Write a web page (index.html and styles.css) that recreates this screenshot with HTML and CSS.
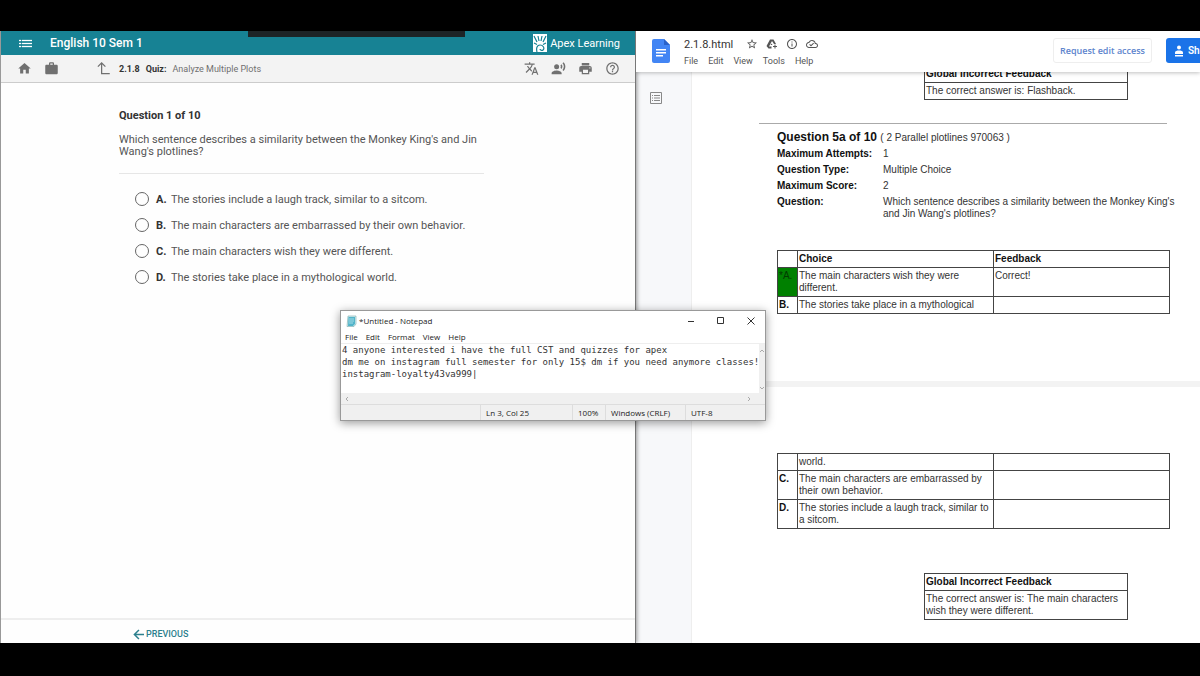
FILE: index.html
```
<!DOCTYPE html>
<html lang="en">
<head>
  <meta charset="UTF-8">
  <title>English 10 Sem 1</title>
  <link rel="stylesheet" href="styles.css">
</head>
<body>

  <div class="desktop">

    <section class="apex">
      <header class="apex-header">
        <button class="icon-btn" aria-label="Contents">
          <svg class="icon-menu" viewBox="0 0 13 9"><path d="M0 1h2v1H0zM3 1h10v1H3zM0 4h2v1H0zM3 4h10v1H3zM0 7h2v1H0zM3 7h10v1H3z" stroke="currentColor" stroke-width=".3"/></svg>
        </button>
        <h1 class="course">English 10 Sem 1</h1>
        <div class="apex-logo">
          <svg viewBox="0 0 14 18"><path fill="#fff" d="M0 0h14v18H0z"/><g fill="none" stroke="#178294" stroke-width="1.2"><path d="M1 2l3 6M5 2l1 5M9 2L8 7M13 2l-3 6M1 9l3 1.5M13 9l-3 1.5"/><path d="M4 18c-1-4 0-7 3-7s5 3 3 5c-1 1-3 0-3-1"/></g></svg>
          <span>Apex Learning</span>
        </div>
      </header>

      <nav class="apex-toolbar">
        <button class="icon-btn" aria-label="Home"><svg viewBox="0 0 24 24"><path d="M10 20v-6h4v6h5v-8h3L12 3 2 12h3v8z"/></svg></button>
        <button class="icon-btn" aria-label="Portfolio"><svg viewBox="0 0 24 24"><path d="M20 6h-4V4c0-1.11-.89-2-2-2h-4c-1.11 0-2 .89-2 2v2H4c-1.11 0-2 .89-2 2v11c0 1.11.89 2 2 2h16c1.11 0 2-.89 2-2V8c0-1.11-.89-2-2-2zm-6 0h-4V4h4v2z"/></svg></button>
        <button class="icon-btn up" aria-label="Up one level"><svg viewBox="0 0 24 24"><path d="M3 9l6-6 6 6M9 3v17h13" fill="none" stroke="currentColor" stroke-width="2"/></svg></button>
        <div class="crumb"><b>2.1.8</b><b>Quiz:</b><span>Analyze Multiple Plots</span></div>
        <div class="tools">
          <button class="icon-btn" aria-label="Translate"><svg viewBox="0 0 24 24"><path d="M12.87 15.07l-2.54-2.51.03-.03c1.74-1.94 2.98-4.17 3.71-6.53H17V4h-7V2H8v2H1v1.99h11.17C11.5 7.92 10.44 9.75 9 11.35 8.07 10.32 7.3 9.19 6.69 8h-2c.73 1.63 1.73 3.17 2.98 4.56l-5.09 5.02L4 19l5-5 3.11 3.11.76-2.04zM18.5 10h-2L12 22h2l1.12-3h4.75L21 22h2l-4.5-12zm-2.62 7l1.62-4.33L19.12 17h-3.24z"/></svg></button>
          <button class="icon-btn" aria-label="Read aloud"><svg viewBox="0 0 24 24"><circle cx="9" cy="9" r="4"/><path d="M9 15c-2.67 0-8 1.34-8 4v2h16v-2c0-2.66-5.33-4-8-4zM16.76 5.36l-1.68 1.69c.84 1.18.84 2.71 0 3.89l1.68 1.69c2.02-2.02 2.02-5.07 0-7.27zM20.07 2l-1.63 1.63c2.77 3.02 2.77 7.56 0 10.74L20.07 16c3.9-3.89 3.91-9.95 0-14z"/></svg></button>
          <button class="icon-btn" aria-label="Print"><svg viewBox="0 0 24 24"><path d="M19 8H5c-1.66 0-3 1.34-3 3v6h4v4h12v-4h4v-6c0-1.66-1.34-3-3-3zm-3 11H8v-5h8v5zm3-7c-.55 0-1-.45-1-1s.45-1 1-1 1 .45 1 1-.45 1-1 1zm-1-9H6v4h12V3z"/></svg></button>
          <button class="icon-btn" aria-label="Help"><svg viewBox="0 0 24 24"><path d="M11 18h2v-2h-2v2zm1-16C6.48 2 2 6.48 2 12s4.48 10 10 10 10-4.48 10-10S17.52 2 12 2zm0 18c-4.41 0-8-3.59-8-8s3.59-8 8-8 8 3.59 8 8-3.59 8-8 8zm0-14c-2.21 0-4 1.79-4 4h2c0-1.1.9-2 2-2s2 .9 2 2c0 2-3 1.75-3 5h2c0-2.25 3-2.5 3-5 0-2.21-1.79-4-4-4z"/></svg></button>
        </div>
      </nav>

      <main class="quiz">
        <h2>Question 1 of 10</h2>
        <p>Which sentence describes a similarity between the Monkey King's and Jin Wang's plotlines?</p>
        <form class="options">
          <label><input type="radio" name="answer"><b>A.</b><span>The stories include a laugh track, similar to a sitcom.</span></label>
          <label><input type="radio" name="answer"><b>B.</b><span>The main characters are embarrassed by their own behavior.</span></label>
          <label><input type="radio" name="answer"><b>C.</b><span>The main characters wish they were different.</span></label>
          <label><input type="radio" name="answer"><b>D.</b><span>The stories take place in a mythological world.</span></label>
        </form>
      </main>

      <footer class="apex-footer">
        <a href="#"><svg viewBox="0 0 12 12"><path d="M12 6H2M6.5 1L1.5 6l5 5" fill="none" stroke="currentColor" stroke-width="1.6"/></svg>PREVIOUS</a>
      </footer>
    </section>

    <section class="docs">
      <header class="docs-header">
        <svg class="docs-logo" viewBox="0 0 18 24"><path fill="#4285f4" d="M2 0h10l6 6v16a2 2 0 0 1-2 2H2a2 2 0 0 1-2-2V2a2 2 0 0 1 2-2z"/><path fill="#2a62c9" d="M12 0l6 6h-6z"/><path fill="#fff" d="M4 10h10v1.5H4zM4 13h10v1.5H4zM4 16h7v1.5H4z"/></svg>
        <div class="docs-title">
          <div class="title-row">
            <span class="doc-name">2.1.8.html</span>
            <button class="icon-btn" aria-label="Star"><svg viewBox="0 0 24 24"><path d="M22 9.24l-7.19-.62L12 2 9.19 8.63 2 9.24l5.46 4.73L5.82 21 12 17.27 18.18 21l-1.63-7.03L22 9.24zM12 15.4l-3.76 2.27 1-4.28-3.32-2.88 4.38-.38L12 6.1l1.71 4.04 4.38.38-3.32 2.88 1 4.28L12 15.4z"/></svg></button>
            <button class="icon-btn" aria-label="Add shortcut to Drive"><svg viewBox="0 0 24 24"><path d="M8 3h7l5 9h-4l-4-6-6 11h5v4H5l-4-5zM11 11l2 3h-4zM17 13h2v3h3v2h-3v3h-2v-3h-3v-2h3z"/></svg></button>
            <button class="icon-btn" aria-label="Details"><svg viewBox="0 0 24 24"><path d="M11 7h2v2h-2zm0 4h2v6h-2zm1-9C6.48 2 2 6.48 2 12s4.48 10 10 10 10-4.48 10-10S17.52 2 12 2zm0 18c-4.41 0-8-3.59-8-8s3.59-8 8-8 8 3.59 8 8-3.59 8-8 8z"/></svg></button>
            <button class="icon-btn" aria-label="Saved to Drive"><svg viewBox="0 0 24 24"><path d="M19.35 10.04C18.67 6.59 15.64 4 12 4 9.11 4 6.6 5.64 5.35 8.04 2.34 8.36 0 10.91 0 14c0 3.31 2.69 6 6 6h13c2.76 0 5-2.24 5-5 0-2.64-2.05-4.78-4.65-4.96zM19 18H6c-2.21 0-4-1.79-4-4 0-2.05 1.53-3.76 3.56-3.97l1.07-.11.5-.95C8.08 7.14 9.94 6 12 6c2.62 0 4.88 1.86 5.39 4.43l.3 1.5 1.53.11c1.56.1 2.78 1.41 2.78 2.96 0 1.65-1.35 3-3 3zm-9-3.82l-2.09-2.09L6.5 13.5 10 17l6.01-6.01-1.41-1.41z"/></svg></button>
          </div>
          <div class="docs-menu">
            <button>File</button><button>Edit</button><button>View</button><button>Tools</button><button>Help</button>
          </div>
        </div>
        <button class="request">Request edit access</button>
        <button class="share"><svg viewBox="0 0 10 12"><circle cx="5" cy="2.5" r="2"/><path d="M1 9V7.5C1 6 3 5.5 5 5.5S9 6 9 7.5V9zM1 10h8v1.5H1z"/></svg>Share</button>
      </header>

      <div class="docs-body">
        <aside class="outline">
          <button class="icon-btn" aria-label="Show outline"><svg viewBox="0 0 12 12"><path d="M.5 .5h11v11H.5zM2 3.5h1M4 3.5h6M2 6h1M4 6h6M2 8.5h1M4 8.5h6" fill="none" stroke="currentColor"/></svg></button>
        </aside>
        <div class="pages">
          <article class="page page-one">
            <table class="feedback">
              <tr><th>Global Incorrect Feedback</th></tr>
              <tr><td>The correct answer is: Flashback.</td></tr>
            </table>
            <hr>
            <h2>Question 5a of 10 <small>( 2 Parallel plotlines 970063 )</small></h2>
            <dl>
              <dt>Maximum Attempts:</dt><dd>1</dd>
              <dt>Question Type:</dt><dd>Multiple Choice</dd>
              <dt>Maximum Score:</dt><dd>2</dd>
              <dt>Question:</dt><dd>Which sentence describes a similarity between the Monkey King's and Jin Wang's plotlines?</dd>
            </dl>
            <table class="choices">
              <tr><th></th><th>Choice</th><th>Feedback</th></tr>
              <tr><th class="right">*A.</th><td>The main characters wish they were different.</td><td>Correct!</td></tr>
              <tr><th>B.</th><td>The stories take place in a mythological</td><td></td></tr>
            </table>
          </article>
          <article class="page page-two">
            <table class="choices">
              <tr><th></th><td>world.</td><td></td></tr>
              <tr><th>C.</th><td>The main characters are embarrassed by their own behavior.</td><td></td></tr>
              <tr><th>D.</th><td>The stories include a laugh track, similar to a sitcom.</td><td></td></tr>
            </table>
            <table class="feedback">
              <tr><th>Global Incorrect Feedback</th></tr>
              <tr><td>The correct answer is: The main characters wish they were different.</td></tr>
            </table>
          </article>
        </div>
      </div>
    </section>

    <div class="top-tab"></div>

    <section class="notepad">
      <header class="np-title">
        <svg class="np-icon" viewBox="0 0 11 12"><path fill="#d5eef3" stroke="#7aa" stroke-width=".6" d="M2 1h8v8l-2 2.5H1z"/><path fill="#52b4c9" d="M2.5 2H9v7l-2 2H2z"/><path stroke="#c8edf4" stroke-width=".7" d="M3 4h5M3 6h5M3 8h4"/></svg>
        <span>*Untitled - Notepad</span>
        <div class="np-controls">
          <button aria-label="Minimize"><svg viewBox="0 0 8 8"><path d="M1 4.5h6"/></svg></button>
          <button aria-label="Maximize"><svg viewBox="0 0 8 8"><path d="M.5 .5h6v6h-6z"/></svg></button>
          <button aria-label="Close"><svg viewBox="0 0 8 8"><path d="M.5 .5l7 7M7.5 .5l-7 7"/></svg></button>
        </div>
      </header>
      <nav class="np-menu"><button>File</button><button>Edit</button><button>Format</button><button>View</button><button>Help</button></nav>
      <div class="np-edit">
        <textarea aria-label="Text editor" wrap="off" spellcheck="false">4 anyone interested i have the full CST and quizzes for apex
dm me on instagram full semester for only 15$ dm if you need anymore classes!
instagram-loyalty43va999|</textarea>
        <div class="scroll-y">
          <svg viewBox="0 0 6 6"><path d="M1 4l2-2 2 2"/></svg>
          <svg viewBox="0 0 6 6"><path d="M1 2l2 2 2-2"/></svg>
        </div>
      </div>
      <div class="scroll-x">
        <svg viewBox="0 0 6 6"><path d="M4 1L2 3l2 2"/></svg>
        <svg viewBox="0 0 6 6"><path d="M2 1l2 2-2 2"/></svg>
      </div>
      <footer class="np-status"><span>Ln 3, Col 25</span><span>100%</span><span>Windows (CRLF)</span><span>UTF-8</span></footer>
    </section>

  </div>

</body>
</html>
```
FILE: styles.css
```
* { box-sizing: border-box; }
body { margin: 0; background: #000; font-family: Roboto, sans-serif; font-size: 10px; color: #555; }
h1, h2, p, dl, dd { margin: 0; }
button { padding: 0; border: 0; background: none; font: inherit; color: inherit; cursor: pointer; }
svg { display: block; fill: currentColor; }
.icon-btn svg { width: 15px; height: 15px; }

.desktop { position: relative; display: flex; height: 100vh; padding: 31px 0 33px; overflow: hidden; }
.top-tab { position: absolute; left: 248px; top: 31px; width: 217px; height: 6px; background: #1d2427; z-index: 2; }

/* quiz window */
.apex { flex: 0 0 53%; display: flex; flex-direction: column; background: #fefefe; border-left: 1px solid #999; border-right: 1px solid #777; z-index: 1; box-shadow: 1px 0 4px rgba(0,0,0,0.4); }
.apex-header { display: flex; align-items: center; height: 24px; padding: 0 15px 0 18px; background: #178294; color: #fff; }
.apex-header .icon-menu { width: 13px; height: 9px; }
.course { margin-left: 18px; font-size: 12px; font-weight: 500; }
.apex-logo { display: flex; align-items: center; gap: 3px; margin-left: auto; font-size: 11px; }
.apex-logo svg { width: 14px; height: 18px; }
.apex-toolbar { display: flex; align-items: center; height: 28px; padding: 0 15px 0 16px; background: #f3f3f3; border-bottom: 1px solid #ccc; color: #707070; }
.apex-toolbar .icon-btn + .icon-btn { margin-left: 12px; }
.apex-toolbar .up { padding-left: 25px; }
.crumb { display: flex; gap: 6px; margin-left: 8px; font-size: 9px; }
.crumb b { color: #333; }
.tools { display: flex; margin-left: auto; }
.quiz { flex: 1; padding: 26px 151px 0 118px; }
.quiz h2 { font-size: 11px; line-height: 14px; font-weight: 700; color: #333; }
.quiz p { margin-top: 11px; padding: 0 4px 15px 0; border-bottom: 1px solid #e6e6e6; font-size: 11px; line-height: 12px; }
.options { padding: 12px 0 0 16px; font-size: 11px; }
.options label { display: flex; align-items: center; height: 26px; }
.options input { appearance: none; width: 14px; height: 14px; margin: 0; border: 1px solid #666; border-radius: 50%; }
.options b { width: 15px; margin-left: 7px; color: #333; }
.apex-footer { height: 25px; padding: 8px 0 0 132px; border-top: 2px solid #eee; }
.apex-footer a { display: inline-flex; align-items: center; gap: 2px; color: #2c7f8d; font-size: 9px; font-weight: 500; line-height: 12px; text-decoration: none; }
.apex-footer svg { width: 11px; height: 11px; }

/* document window */
.docs { flex: 1; min-width: 0; display: flex; flex-direction: column; background: #fff; overflow: hidden; }
.docs-header { display: flex; flex: none; align-items: center; height: 41px; padding: 0 0 2px 16px; background: #fff; box-shadow: 0 1px 4px rgba(0,0,0,0.25); z-index: 1; }
.docs-logo { width: 18px; height: 24px; }
.docs-title { margin-left: 14px; margin-right: auto; padding-top: 4px; }
.title-row { display: flex; align-items: center; gap: 8px; height: 17px; color: #555; }
.title-row svg { width: 12px; height: 12px; }
.doc-name { margin-right: 5px; font-size: 11px; color: #333; }
.docs-menu { display: flex; gap: 10px; height: 17px; font-size: 9px; }
.request { height: 25px; padding: 0 6px; border: 1px solid #eee; border-radius: 3px; color: #5d84cd; font-family: "Open Sans", sans-serif; font-size: 9px; font-weight: 600; white-space: nowrap; }
.share { display: flex; flex: none; align-items: center; gap: 4px; height: 25px; width: 64px; margin-left: 14px; margin-right: -30px; padding-left: 8px; border-radius: 3px; background: #1a73e8; color: #fff; font-weight: 600; }
.share svg { width: 10px; height: 12px; }
.docs-body { flex: 1; min-height: 0; display: flex; overflow: hidden; }
.outline { flex: 0 0 56px; padding: 20px 0 0 14px; background: #f7f8fa; border-right: 1px solid #eee; color: #888; }
.outline svg { width: 12px; height: 12px; }
.pages { flex: 1; font-family: "Liberation Sans", sans-serif; font-size: 10px; line-height: 12px; color: #333; }
.page { display: flow-root; padding: 0 20px 0 85px; }
.page-one { height: 315px; border-bottom: 6px solid #f3f3f3; }
.page-two { padding-top: 66px; }
.page table { border-collapse: collapse; }
.page th, .page td { height: 17px; padding: 2px 1px; border: 1px solid #444; text-align: left; vertical-align: top; }
.page th { color: #111; }
.feedback { width: 204px; margin-left: 147px; }
/* page is scrolled, so its first table starts under the header */
.page-one .feedback { margin-top: -7px; }
.page hr { margin: 23px 13px 0 -18px; border: 0; border-top: 1px solid #aaa; }
.page h2 { margin-top: 4px; font-size: 12px; line-height: 18px; color: #111; }
.page small { font-size: 10px; font-weight: 400; color: #333; }
.page dl { display: grid; grid-template-columns: 106px 1fr; row-gap: 4px; margin-top: 1px; }
.page dt { font-weight: 700; color: #111; }
.choices { width: 393px; table-layout: fixed; }
.page-one .choices { margin-top: 30px; }
.choices tr > :nth-child(1) { width: 20px; }
.choices tr > :nth-child(2) { width: 196px; }
.choices .right { background: #008000; color: #003b00; font-weight: 400; }
.page-two .feedback { margin-top: 44px; }

/* notepad */
.notepad { position: absolute; left: 340px; top: 310px; width: 426px; z-index: 2; background: #fff; border: 1px solid #999; box-shadow: 0 2px 9px rgba(0,0,0,0.4); font-family: "Open Sans", sans-serif; font-size: 8px; line-height: 12px; color: #222; }
.np-title { display: flex; align-items: center; height: 19px; padding: 0 10px 0 5px; }
.np-icon { width: 11px; height: 12px; margin-right: 2px; }
.np-controls { display: flex; gap: 22px; margin-left: auto; }
.np-controls svg { width: 8px; height: 8px; fill: none; stroke: #333; }
.np-menu { display: flex; gap: 8px; height: 13px; padding-left: 4px; }
.np-edit { display: flex; height: 50px; border-top: 1px solid #eee; }
.np-edit textarea { flex: 1; min-width: 0; padding: 0 0 0 1px; border: 0; outline: 0; resize: none; overflow: hidden; font-family: "DejaVu Sans Mono", monospace; font-size: 9px; line-height: 12px; color: #333; }
.scroll-y, .scroll-x { display: flex; justify-content: space-between; background: #f0f0f0; }
.scroll-y { flex-direction: column; width: 6px; padding: 4px 0 2px; }
.scroll-x { align-items: center; height: 11px; padding: 0 13px 0 3px; }
.scroll-y svg, .scroll-x svg { width: 6px; height: 6px; fill: none; stroke: #aaa; }
.np-status { display: grid; grid-template-columns: 92px 33px 80px 80px; justify-content: end; height: 16px; background: #f0f0f0; border-top: 1px solid #ddd; line-height: 15px; }
.np-status span { padding-left: 5px; border-left: 1px solid #ddd; }
```
